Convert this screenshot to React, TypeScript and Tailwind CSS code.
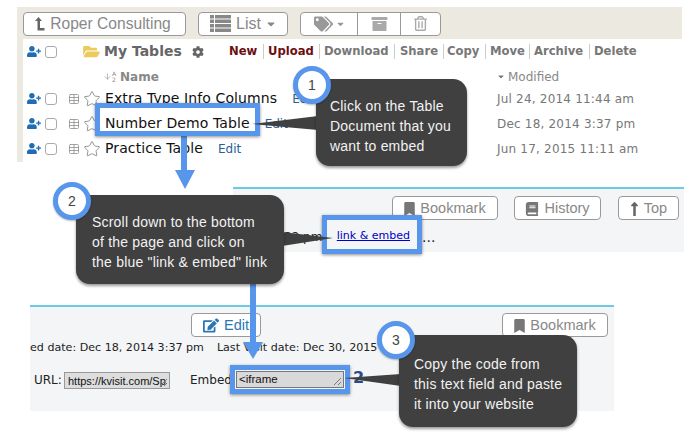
import { ArrowDown, Star, Table } from "lucide-react";
import {
  FaArchive,
  FaBook,
  FaBookmark,
  FaCaretDown,
  FaCog,
  FaEdit,
  FaFolderOpen,
  FaLongArrowAltUp,
  FaRegTrashAlt,
  FaTags,
  FaUserPlus,
} from "react-icons/fa";

const verdana = "font-['DejaVu_Sans',sans-serif]";
const helvetica = "font-['Liberation_Sans',Arial,sans-serif]";

const actions = [
  { label: "New", className: "text-[#6b0f0f] w-[34px]" },
  { label: "Upload", className: "text-[#6b0f0f] w-[56px] border-l border-[#ccc] pl-[4px]" },
  { label: "Download", className: "text-[#777] w-[75px] border-l border-[#ccc] pl-[4px]" },
  { label: "Share", className: "text-[#777] w-[49px] border-l border-[#ccc] pl-[5px]" },
  { label: "Copy", className: "text-[#777] w-[42px] border-l border-[#ccc] pl-[3px]" },
  { label: "Move", className: "text-[#777] w-[44px] border-l border-[#ccc] pl-[4px]" },
  { label: "Archive", className: "text-[#777] w-[60px] border-l border-[#ccc] pl-[4px]" },
  { label: "Delete", className: "text-[#777] border-l border-[#ccc] pl-[4px]" },
];

const rows = [
  { name: "Extra Type Info Columns", date: "Jul 24, 2014 11:44 am" },
  { name: "Number Demo Table", date: "Dec 18, 2014 3:37 pm" },
  { name: "Practice Table", date: "Jun 17, 2015 11:11 am" },
];

function OutlineButton({ className, children }: { className: string; children: React.ReactNode }) {
  return (
    <div
      className={`flex h-6 items-center justify-center gap-[5px] rounded-[4px] border border-[#999] bg-white text-[#888] ${helvetica} ${className}`}
    >
      {children}
    </div>
  );
}

function CheckIcons() {
  return (
    <div className="flex w-[40px] items-center gap-[4px] pl-[4px]">
      <FaUserPlus className="h-[13px] w-[14px] text-[#1f6db5]" />
      <span className="h-[12px] w-[12px] rounded-[3px] border border-[#aaa] bg-white" />
    </div>
  );
}

function ResizeGrip() {
  return (
    <svg className="absolute bottom-px right-px" width="9" height="9" viewBox="0 0 9 9">
      <path d="M1 8 L8 1 M5 8 L8 5" stroke="#777" strokeWidth="1" />
    </svg>
  );
}

function Highlight({ className, children }: { className: string; children?: React.ReactNode }) {
  return (
    <div
      className={`absolute border-[5px] border-[#5896ec] shadow-[0_1px_3px_rgba(0,0,0,0.45)] ${className}`}
    >
      {children}
    </div>
  );
}

function Callout({ className, lines }: { className: string; lines: string[] }) {
  return (
    <div
      className={`absolute flex flex-col justify-center rounded-[14px] bg-[#404040] text-[14px] leading-[20px] tracking-[0.2px] text-[#f2f2f2] shadow-[0_2px_3px_rgba(0,0,0,0.4)] ${helvetica} ${className}`}
    >
      {lines.map((line) => (
        <div key={line} className="whitespace-nowrap">
          {line}
        </div>
      ))}
    </div>
  );
}

function Badge({ className, n }: { className: string; n: number }) {
  return (
    <div
      className={`absolute flex h-[38px] w-[38px] items-center justify-center rounded-full border-[5px] border-[#5896ec] bg-white text-[14px] text-[#444] shadow-[0_1px_2px_rgba(0,0,0,0.3)] ${helvetica} ${className}`}
    >
      {n}
    </div>
  );
}

export default function App() {
  return (
    <div className="relative h-[439px] w-[700px] overflow-hidden bg-white">
      {/* first screenshot: table list */}
      <section className="ml-[17px] mt-[7px] h-[155px] w-[665px] border-l-[6px] border-[#ece9e0]">
        <div className="-ml-[6px] flex h-[32px] items-center bg-[#ece9e0] pl-[6px] pt-[1px]">
          <OutlineButton className="w-[163px] gap-[4px] pr-[3px] text-[15.6px]">
            <svg width="10" height="14" viewBox="0 0 10 14">
              <path d="M3.500 0 L7 4 H5 V11 H9.500 V13.500 H2.500 V4 H0 Z" fill="#666" />
            </svg>
            Roper Consulting
          </OutlineButton>
          <OutlineButton className="ml-[12px] w-[90px] text-[16px]">
            <svg width="21" height="17" viewBox="0 0 21 17" fill="#888">
              <path d="M0 0h4v3.500H0zM5 0h16v3.500H5zM0 4.500h4V8H0zM5 4.500h16V8H5zM0 9h4v3.500H0zM5 9h16v3.500H5zM0 13.500h4V17H0zM5 13.500h16V17H5z" />
            </svg>
            List
            <FaCaretDown className="h-[12px] w-[10px]" />
          </OutlineButton>
          <div className="ml-[12px] flex h-6 w-[141px] rounded-[4px] border border-[#999] bg-white text-[#999]">
            <div className="flex w-[56px] items-center justify-center gap-[3px]">
              <FaTags className="h-[16px] w-[19px]" />
              <FaCaretDown className="h-[10px] w-[9px]" />
            </div>
            <div className="flex w-[43px] items-center justify-center border-l border-[#999]">
              <FaArchive className="h-[16px] w-[17px] text-[#aaa]" />
            </div>
            <div className="flex flex-1 items-center justify-center border-l border-[#999]">
              <FaRegTrashAlt className="h-[15px] w-[13px] text-[#aaa]" />
            </div>
          </div>
        </div>

        <div className={verdana}>
          <div className="flex h-[24px] items-center pt-[1px]">
            <CheckIcons />
            <FaFolderOpen className="ml-[20px] h-[15px] w-[17px] text-[#ebcb5c]" />
            <span className="ml-[4px] w-[78px] whitespace-nowrap text-[14px] font-bold text-[#666]">My Tables</span>
            <FaCog className="ml-[10px] h-[12px] w-[12px] text-[#666]" />
            <div className="ml-[25px] flex text-[11.6px] font-bold leading-[15px]">
              {actions.map((a) => (
                <span key={a.label} className={a.className}>
                  {a.label}
                </span>
              ))}
            </div>
          </div>
          <div className="flex h-[23px] items-center pt-[4px] text-[12px]">
            <ArrowDown className="ml-[80px] h-[13px] w-[9px] text-[#888]" strokeWidth={1.5} />
            <span className="flex w-[7px] flex-col text-[6px] font-normal leading-[6px] text-[#888]">
              <span>A</span>
              <span>2</span>
            </span>
            <span className="ml-[1px] w-[377px] font-bold text-[#888]">Name</span>
            <FaCaretDown className="h-[9px] w-[8px] text-[#777]" />
            <span className="ml-[3px] text-[#888]">Modified</span>
          </div>
          {rows.map((row) => (
            <div key={row.name} className="flex h-[25px] items-center">
              <CheckIcons />
              <Table className="ml-[5px] h-[12px] w-[12px] text-[#888]" strokeWidth={1.5} />
              <Star className="ml-[3px] h-[18px] w-[18px] text-[#888]" strokeWidth={1.2} />
              <div className="ml-[4px] flex w-[392px] items-center">
                <span className="whitespace-nowrap text-[14px] tracking-[0.1px] text-[#111]">{row.name}</span>
                <span className="ml-[15px] text-[12px] text-[#2a6099]">Edit</span>
              </div>
              <span className="whitespace-nowrap text-[12px] tracking-[0.2px] text-[#777]">{row.date}</span>
            </div>
          ))}
        </div>
      </section>

      {/* second screenshot: page footer */}
      <section className="ml-[233px] mt-[25px] h-[65px] w-[451px] border-t-2 border-[#6ccbe2] bg-[#f4f5f7]">
        <div className="flex items-start pl-[159px] pt-[7px]">
          <OutlineButton className="w-[106px] pt-px text-[14.500px]">
            <FaBookmark className="h-[14px] w-[11px] text-[#777]" />
            Bookmark
          </OutlineButton>
          <OutlineButton className="ml-[16px] w-[87px] pt-px text-[14.500px]">
            <FaBook className="h-[14px] w-[14px] text-[#777]" />
            History
          </OutlineButton>
          <OutlineButton className="ml-[17px] w-[61px] pt-px text-[14.500px]">
            <FaLongArrowAltUp className="h-[16px] w-[9px] text-[#666]" />
            Top
          </OutlineButton>
        </div>
        <div className={`mt-[9px] flex items-center text-[12px] leading-[16px] text-[#222] ${verdana}`}>
          <span className="ml-[51px] w-[54px] whitespace-nowrap">32 pm</span>
          <span className="ml-[84px] text-[14px]">...</span>
        </div>
      </section>

      {/* third screenshot: document details */}
      <section className="ml-[30px] mt-[53px] h-[106px] w-[584px] border-t-2 border-[#6ccbe2] bg-[#f4f5f7]">
        <div className="flex pt-[6px]">
          <OutlineButton className="ml-[161px] w-[70px] pt-px text-[14.500px]">
            <span className="flex items-center gap-[5px] text-[#2a77b5]">
              <FaEdit className="h-[15px] w-[16px]" />
              Edit
            </span>
          </OutlineButton>
          <OutlineButton className="ml-[241px] w-[106px] pt-px text-[14.500px]">
            <FaBookmark className="h-[14px] w-[11px] text-[#777]" />
            Bookmark
          </OutlineButton>
        </div>
        <div className={`mt-px whitespace-nowrap text-[11.1px] leading-[20px] text-[#222] ${verdana}`}>
          <span>ed date: Dec 18, 2014 3:37 pm</span>
          <span className="ml-[13px]">Last Visit date: Dec 30, 2015</span>
        </div>
        <div className={`mt-[10px] flex items-center text-[12px] text-[#222] ${verdana}`}>
          <span className="ml-[4px] w-[30px]">URL:</span>
          <div className={`relative h-[17px] w-[106px] overflow-hidden whitespace-nowrap border border-[#999] bg-[#ddd] pl-[3px] text-[11px] leading-[16px] text-[#111] ${helvetica}`}>
            https://kvisit.com/Sp
            <ResizeGrip />
          </div>
          <span className="ml-[20px]">Embed:</span>
          <span className="ml-[117px] -translate-y-[2px] text-[16px] font-semibold text-[#2a4a8a]">2</span>
        </div>
      </section>

      {/* annotations */}
      <div className="absolute left-[181px] top-[135px] h-[36px] w-[6px] bg-[#5896ec]" />
      <div className="absolute left-[175px] top-[170px] h-0 w-0 border-x-[10px] border-t-[19px] border-x-transparent border-t-[#5896ec]" />
      <div className="absolute left-[250px] top-[284px] h-[60px] w-[6px] bg-[#5896ec]" />
      <div className="absolute left-[243px] top-[342px] h-0 w-0 border-x-[10px] border-t-[17px] border-x-transparent border-t-[#5896ec]" />

      <Highlight className="left-[95px] top-[103px] h-[33px] w-[165px]" />
      <Highlight className={`left-[322px] top-[215px] flex h-[39px] w-[100px] items-center justify-end bg-[#f4f5f7] pr-[7px] pt-[4px] text-[11px] text-[#0000c8] underline ${verdana}`}>
        link &amp; embed
      </Highlight>
      <Highlight className="left-[230px] top-[365px] h-[29px] w-[120px] bg-[#f4f5f7] p-px">
        <div className={`relative flex h-full items-center border border-[#777] bg-[#d9d9d9] pl-[2px] text-[11.5px] text-[#111] ${helvetica}`}>
          &lt;iframe
          <ResizeGrip />
        </div>
      </Highlight>

      <svg className="absolute left-0 top-0" width="700" height="439" viewBox="0 0 700 439">
        <polygon points="252,124 318,116 318,130" fill="#404040" />
        <polygon points="333,238 282,232 282,246" fill="#404040" />
        <polygon points="344,378 401,374 401,386" fill="#404040" />
      </svg>

      <Callout className="left-[316px] top-[79px] h-[87px] w-[151px] pl-[14px] pt-[6px]" lines={["Click on the Table", "Document that you", "want to embed"]} />
      <Callout className="left-[76px] top-[195px] h-[89px] w-[208px] pl-[16px] pt-[4px]" lines={["Scroll down to the bottom", "of the page and click on", 'the blue "link & embed" link']} />
      <Callout className="left-[399px] top-[335px] h-[92px] w-[178px] pl-[15px] pt-[6px]" lines={["Copy the code from", "this text field and paste", "it into your website"]} />

      <Badge className="left-[293px] top-[66px]" n={1} />
      <Badge className="left-[53px] top-[182px]" n={2} />
      <Badge className="left-[377px] top-[321px]" n={3} />
    </div>
  );
}
